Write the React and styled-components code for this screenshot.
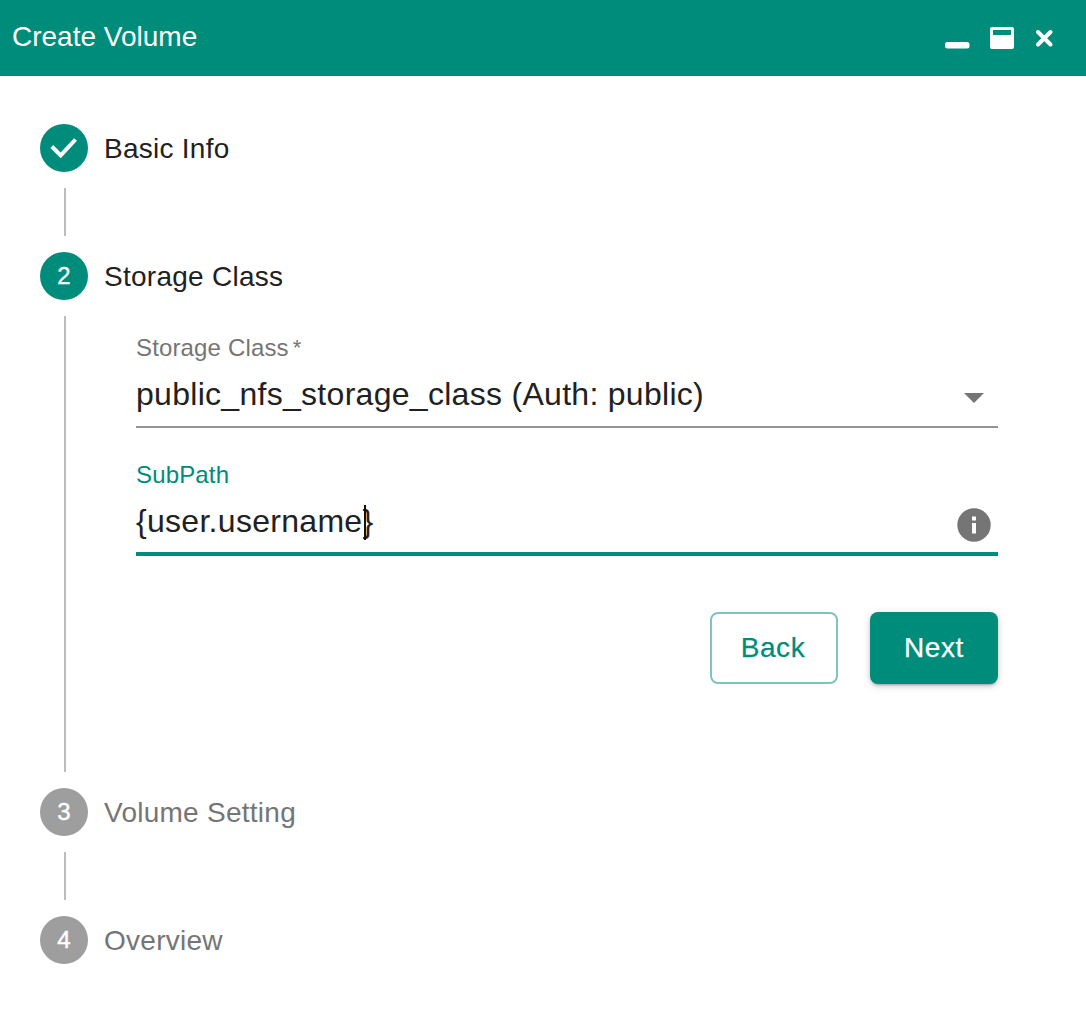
import React from "react";
import styled, { createGlobalStyle } from "styled-components";

const Global = createGlobalStyle`
  html, body { margin: 0; padding: 0; background: #fff; }
  body { font-family: "Liberation Sans", Arial, sans-serif; color: #212121; }
`;
const Page = styled.div`width: 1086px; height: 1018px; overflow: hidden; background: #fff;`;
const Header = styled.header`
  height: 76px; background: #008c7a; color: #fff; display: flex; align-items: center;
  justify-content: space-between; padding: 0 32px 4px 12px; box-sizing: border-box;
`;
const Title = styled.h1`margin: 0; font-size: 28px; line-height: 32px; font-weight: 400; position: relative; top: 1px;`;
const WindowControls = styled.div`display: flex; align-items: center; gap: 19px; margin-top: 4px;`;
const Stepper = styled.main`padding: 48px 88px 0 40px;`;
const Step = styled.div`display: flex; align-items: center; gap: 16px; height: 48px;`;
const Bullet = styled.div`
  width: 48px; height: 48px; border-radius: 50%; flex: none; display: flex; align-items: center; justify-content: center;
  background: ${p => (p.$active ? "#008c7a" : "#9e9e9e")}; color: #fff; font-size: 24px; -webkit-text-stroke: 0.4px #fff;
`;
const StepLabel = styled.div`font-size: 28px; line-height: 32px; letter-spacing: 0.26px; padding-top: 2px; color: ${p => (p.$active ? "#212121" : "#757575")};`;
const Connector = styled.div`
  margin: 16px 0 16px 24px; height: ${p => p.$height}px; border-left: 2px solid #bdbdbd; box-sizing: border-box;
  ${p => p.$content ? "padding: 16px 0 0 70px;" : ""}
`;
const Field = styled.div`position: relative; height: ${p => p.$height}px;
  border-bottom: ${p => (p.$focused ? "4px solid #008c7a" : "2px solid #949494")}; box-sizing: border-box;`;
const FieldLabel = styled.label`display: block; font-size: 24px; line-height: 28px; letter-spacing: 0.15px; padding-top: ${p => p.$top}px; color: ${p => (p.$focused ? "#008c7a" : "#757575")};`;
const Star = styled.span`margin-left: 4px; font-size: 22px; position: relative; top: -1px;`;
const FieldRow = styled.div`display: flex; align-items: center; justify-content: space-between; margin-top: ${p => p.$top}px; height: 40px; font-size: 32px; line-height: 40px; letter-spacing: 0.29px;`;
const Value = styled.div`position: relative; white-space: nowrap;`;
const Caret = styled.span`position: absolute; left: 228px; top: 4px; width: 2px; height: 35px; background: #111;`;
const Arrow = styled.span`width: 0; height: 0; border-left: 10px solid transparent; border-right: 10px solid transparent; border-top: 10px solid #757575; margin: 7px 14px 0 0;`;
const InfoIcon = styled.svg`margin: 8px 7px 0 0;`;
const Actions = styled.div`display: flex; justify-content: flex-end; gap: 32px; margin-top: 56px;`;
const Button = styled.button`
  width: 128px; height: 72px; border-radius: 8px; font: 400 28px "Liberation Sans", Arial, sans-serif; padding: 0 ${p => (p.$primary ? 0 : 2)}px 0 0; letter-spacing: 0.6px; -webkit-text-stroke: 0.25px currentColor;
  ${p => p.$primary
    ? "background:#008c7a;color:#fff;border:0;box-shadow:0 3px 2px -2px rgba(0,0,0,.2),0 2px 4px rgba(0,0,0,.14),0 2px 10px rgba(0,0,0,.12);"
    : "background:#fff;color:#008c7a;border:2px solid #80c5bc;"}
`;

export default function App() {
  return (
    <Page>
      <Global />
      <Header>
        <Title>Create Volume</Title>
        <WindowControls>
          <svg width="26" height="26" viewBox="0 0 26 26"><rect x="1" y="17" width="24.5" height="6.5" rx="2.5" fill="#fff" /></svg>
          <svg width="26" height="26" viewBox="0 0 26 26"><path fillRule="evenodd" d="M3 2h20a2 2 0 0 1 2 2v18a2 2 0 0 1-2 2H3a2 2 0 0 1-2-2V4a2 2 0 0 1 2-2zm1 3v5h18V5z" fill="#fff" /></svg>
          <svg width="20" height="20" viewBox="0 0 20 20"><path d="M4 4L16.5 16.5M16.5 4L4 16.5" stroke="#fff" strokeWidth="4" strokeLinecap="round" /></svg>
        </WindowControls>
      </Header>
      <Stepper>
        <Step>
          <Bullet $active>
            <svg width="32" height="32" viewBox="0 0 32 32"><path d="M3.8 14.5L12.7 23.4L27.5 7.5" fill="none" stroke="#fff" strokeWidth="4" /></svg>
          </Bullet>
          <StepLabel $active>Basic Info</StepLabel>
        </Step>
        <Connector $height={48} />
        <Step><Bullet $active>2</Bullet><StepLabel $active>Storage Class</StepLabel></Step>
        <Connector $height={456} $content>
          <Field $height={96}>
            <FieldLabel $top={2}>Storage Class<Star>*</Star></FieldLabel>
            <FieldRow $top={11}>
              <Value>public_nfs_storage_class (Auth: public)</Value>
              <Arrow />
            </FieldRow>
          </Field>
          <Field $height={128} $focused>
            <FieldLabel $focused $top={33}>SubPath</FieldLabel>
            <FieldRow $top={12}>
              <Value>{"{user.username}"}<Caret /></Value>
              <InfoIcon width="34" height="34" viewBox="0 0 34 34">
                <circle cx="17" cy="17" r="16.7" fill="#757575" />
                <rect x="15" y="8.5" width="4" height="4" fill="#fff" />
                <rect x="15" y="15" width="4" height="10.5" fill="#fff" />
              </InfoIcon>
            </FieldRow>
          </Field>
          <Actions>
            <Button>Back</Button>
            <Button $primary>Next</Button>
          </Actions>
        </Connector>
        <Step><Bullet>3</Bullet><StepLabel>Volume Setting</StepLabel></Step>
        <Connector $height={48} />
        <Step><Bullet>4</Bullet><StepLabel>Overview</StepLabel></Step>
      </Stepper>
    </Page>
  );
}
